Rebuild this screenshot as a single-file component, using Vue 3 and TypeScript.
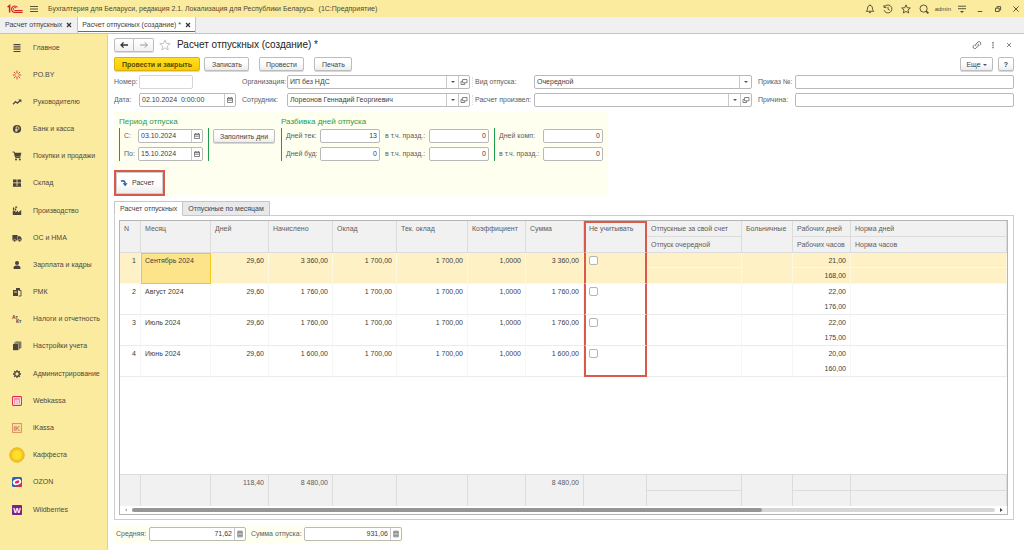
<script setup lang="ts">
import { ref } from 'vue'

interface Section { icon: string; label: string }
interface Row {
  n: number; month: string; days: string; accrued: string; salary: string; current: string
  factor: string; sum: string; skip: boolean; workDays: string; workHours: string
}

const sections: Section[] = [
  { icon: 'list', label: 'Главное' },
  { icon: 'spark', label: 'PO.BY' },
  { icon: 'trend', label: 'Руководителю' },
  { icon: 'coin', label: 'Банк и касса' },
  { icon: 'cart', label: 'Покупки и продажи' },
  { icon: 'store', label: 'Склад' },
  { icon: 'factory', label: 'Производство' },
  { icon: 'truck', label: 'ОС и НМА' },
  { icon: 'person', label: 'Зарплата и кадры' },
  { icon: 'pos', label: 'РМК' },
  { icon: 'tax', label: 'Налоги и отчетность' },
  { icon: 'books', label: 'Настройки учета' },
  { icon: 'gear', label: 'Администрирование' },
  { icon: 'webkassa', label: 'Webkassa' },
  { icon: 'ikassa', label: 'iKassa' },
  { icon: 'gold', label: 'Каффеста' },
  { icon: 'ozon', label: 'OZON' },
  { icon: 'wb', label: 'Wildberries' },
]

const rows = ref<Row[]>([
  { n: 1, month: 'Сентябрь 2024', days: '29,60', accrued: '3 360,00', salary: '1 700,00', current: '1 700,00', factor: '1,0000', sum: '3 360,00', skip: false, workDays: '21,00', workHours: '168,00' },
  { n: 2, month: 'Август 2024', days: '29,60', accrued: '1 760,00', salary: '1 700,00', current: '1 700,00', factor: '1,0000', sum: '1 760,00', skip: false, workDays: '22,00', workHours: '176,00' },
  { n: 3, month: 'Июль 2024', days: '29,60', accrued: '1 760,00', salary: '1 700,00', current: '1 700,00', factor: '1,0000', sum: '1 760,00', skip: false, workDays: '22,00', workHours: '175,00' },
  { n: 4, month: 'Июнь 2024', days: '29,60', accrued: '1 600,00', salary: '1 700,00', current: '1 700,00', factor: '1,0000', sum: '1 600,00', skip: false, workDays: '20,00', workHours: '160,00' },
])
const selected = ref(1)
</script>

<template>
  <div class="app">
    <header class="titlebar">
      <svg class="logo" viewBox="0 0 16 10" aria-label="1С">
        <path d="M0.6 3.2 2.6 1.6V8.6" fill="none" stroke="#d8232a" stroke-width="1.5" />
        <path d="M10.4 3.4A3.2 3.2 0 1 0 7.6 8.4H15.6" fill="none" stroke="#d8232a" stroke-width="1.1" />
        <path d="M9 4A1.5 1.5 0 1 0 7.6 6.5H15.6" fill="none" stroke="#d8232a" stroke-width="1" />
      </svg>
      <button class="plain menu" aria-label="Меню">
        <svg viewBox="0 0 8 8"><path d="M0 1.5H8M0 4H8M0 6.5H8" stroke="#5c5435" stroke-width="1" /></svg>
      </button>
      <span class="apptitle">Бухгалтерия для Беларуси, редакция 2.1. Локализация для Республики Беларусь</span>
      <span class="platform">(1С:Предприятие)</span>
      <div class="tools">
        <button class="plain" aria-label="Уведомления"><svg viewBox="0 0 10 10"><path d="M1.2 7.3C2.4 6.4 2.4 5.4 2.6 4 2.8 2.3 3.7 1.4 5 1.4S7.2 2.3 7.4 4C7.6 5.4 7.6 6.4 8.8 7.3ZM4 8.6H6M5 .5V1.4" /></svg></button>
        <button class="plain" aria-label="История"><svg viewBox="0 0 10 10"><path d="M1.3 3.2A4 4 0 1 1 1.1 6.2M1 1V3.4H3.4M5 2.8V5.2L6.7 6.3" /></svg></button>
        <button class="plain" aria-label="Избранное"><svg viewBox="0 0 10 10"><path d="M5 .9 6.2 3.7 9.3 4 7 6 7.7 9 5 7.4 2.3 9 3 6 .7 4 3.8 3.7Z" /></svg></button>
        <button class="plain" aria-label="Поиск"><svg viewBox="0 0 10 10"><circle cx="4.6" cy="4.6" r="3.6" /><path d="M7 7 9.4 9.4" stroke-width="1.6" /></svg></button>
        <a class="user" href="#">admin</a>
        <button class="plain" aria-label="Настройка"><svg viewBox="0 0 10 10"><path d="M1 2.2H9M1 4.7H9" /><path d="M3 7H7L5 9Z" fill="#4d4731" stroke="none" /></svg></button>
        <button class="plain" aria-label="Свернуть"><svg viewBox="0 0 10 10"><path d="M2.7 7.5H7.3" /></svg></button>
        <button class="plain" aria-label="Восстановить"><svg viewBox="0 0 10 10"><path d="M2.5 4.2H6.2V7.5H2.5ZM4 4V2.6H7.6V6H6.4" /></svg></button>
        <button class="plain" aria-label="Закрыть"><svg viewBox="0 0 10 10"><path d="M2.4 2.4 7.6 7.6M7.6 2.4 2.4 7.6" /></svg></button>
      </div>
    </header>

    <nav class="windows" aria-label="Открытые окна">
      <div class="wtab"><a href="#">Расчет отпускных</a><button class="plain x" aria-label="Закрыть вкладку"><svg viewBox="0 0 6 6"><path d="M1 1 5 5M5 1 1 5" stroke="#333" stroke-width="1.2" /></svg></button></div>
      <div class="wtab on"><a href="#">Расчет отпускных (создание) *</a><button class="plain x" aria-label="Закрыть вкладку"><svg viewBox="0 0 6 6"><path d="M1 1 5 5M5 1 1 5" stroke="#333" stroke-width="1.2" /></svg></button></div>
    </nav>

    <div class="body">
      <nav class="side" aria-label="Разделы">
        <a v-for="s in sections" :key="s.label" href="#">
          <span class="ico">
            <svg v-if="s.icon === 'list'" viewBox="0 0 10 10"><path d="M1.5 1.6H8.5M1.5 3.9H8.5M1.5 6.2H8.5M1.5 8.5H8.5" stroke="#4b4340" stroke-width="1.2" /></svg>
            <svg v-else-if="s.icon === 'spark'" viewBox="0 0 10 10"><path d="M5 .6V3.6M5 6.4V9.4M.8 5H3.6M6.4 5H9.2M1.9 1.9 3.6 3.6M6.4 6.4 8.1 8.1M8.1 1.9 6.4 3.6M3.6 6.4 1.9 8.1" stroke="#d9433f" stroke-width="1" /></svg>
            <svg v-else-if="s.icon === 'trend'" viewBox="0 0 10 10"><path d="M1 7.2 3.6 4.6 5.4 6.2 8.4 3.2" fill="none" stroke="#4b4340" stroke-width="1.3" /><path d="M6.2 2.4H9.4V5.6Z" fill="#4b4340" /></svg>
            <svg v-else-if="s.icon === 'coin'" viewBox="0 0 10 10"><circle cx="5" cy="5" r="4.1" fill="#4b4340" /><path d="M4.2 8V2.8H5.6A1.3 1.3 0 0 1 5.6 5.5H3.2M3.2 6.7H5.8" fill="none" stroke="#fbeb9e" stroke-width=".8" /></svg>
            <svg v-else-if="s.icon === 'cart'" viewBox="0 0 10 10"><path d="M.6 1H2.2L3.6 6.6H8.4" fill="none" stroke="#4b4340" stroke-width="1" /><path d="M2.2 1.8H9.4L8.4 5.8H3.3Z" fill="#4b4340" /><circle cx="4" cy="8.4" r="1" fill="#4b4340" /><circle cx="7.8" cy="8.4" r="1" fill="#4b4340" /></svg>
            <svg v-else-if="s.icon === 'store'" viewBox="0 0 10 10"><path d="M1 1.4H4.6V4.4H1ZM5.4 1.4H9V4.4H5.4ZM1 5.2H4.6V8H1ZM5.4 5.2H9V8H5.4ZM.8 8.2H9.2V9H.8Z" fill="#4b4340" /></svg>
            <svg v-else-if="s.icon === 'factory'" viewBox="0 0 10 10"><path d="M.8 9V5H3.4V6.4L6 4.6V6.4L9.2 4V9Z" fill="#4b4340" /><path d="M1.6 4.4V1.6M3.6 4.4V2.4M3.2 1.2H5.2" stroke="#4b4340" stroke-width="1.3" /></svg>
            <svg v-else-if="s.icon === 'truck'" viewBox="0 0 10 10"><path d="M.4 2H5.6V7.4H.4ZM6 3.2H8.2L9.6 5.2V7.4H6Z" fill="#4b4340" /><circle cx="2.6" cy="7.6" r="1.3" fill="#4b4340" stroke="#fbeb9e" stroke-width=".5" /><circle cx="7.6" cy="7.6" r="1.3" fill="#4b4340" stroke="#fbeb9e" stroke-width=".5" /></svg>
            <svg v-else-if="s.icon === 'person'" viewBox="0 0 10 10"><circle cx="5" cy="3" r="2" fill="#4b4340" /><path d="M1.6 9V7.6C1.6 6 3.6 5.6 5 5.6S8.4 6 8.4 7.6V9Z" fill="#4b4340" /></svg>
            <svg v-else-if="s.icon === 'pos'" viewBox="0 0 10 10"><path d="M1 3H6V9H1ZM4 1H8V3H4Z" fill="#4b4340" /><path d="M6.6 3.4H9V9H6.6" fill="none" stroke="#4b4340" stroke-width=".9" /><path d="M2 5H5" stroke="#fbeb9e" stroke-width=".9" /></svg>
            <svg v-else-if="s.icon === 'tax'" viewBox="0 0 10 10"><text x="0" y="4.8" font-size="5" font-weight="bold" fill="#4b4340">Ат</text><text x="4" y="9.4" font-size="5" font-weight="bold" fill="#4b4340">Кт</text></svg>
            <svg v-else-if="s.icon === 'books'" viewBox="0 0 10 10"><path d="M1 3H6.4V9.2H1Z" fill="#4b4340" /><path d="M2 2.1H7.4V8.2M3.4 1H8.8V7.2" fill="none" stroke="#4b4340" stroke-width=".9" /></svg>
            <svg v-else-if="s.icon === 'gear'" viewBox="0 0 10 10"><circle cx="5" cy="5" r="2.3" fill="none" stroke="#4b4340" stroke-width="1.3" /><path d="M5 1V2.4M5 7.6V9M1 5H2.4M7.6 5H9M2.2 2.2 3.2 3.2M6.8 6.8 7.8 7.8M7.8 2.2 6.8 3.2M3.2 6.8 2.2 7.8" stroke="#4b4340" stroke-width="1.3" /></svg>
            <svg v-else-if="s.icon === 'webkassa'" viewBox="0 0 10 10"><rect x=".6" y=".6" width="8.8" height="8.8" rx=".8" fill="#fff" stroke="#e5264a" stroke-width="1.1" /><path d="M2 3H8M2 5H3.4M4.4 5H5.6M6.6 5H8M2 7H3.4M4.4 7H5.6M6.6 7H8" stroke="#e5264a" stroke-width="1.1" /></svg>
            <svg v-else-if="s.icon === 'ikassa'" viewBox="0 0 10 10"><rect x=".5" y=".5" width="9" height="9" fill="#f8df95" stroke="#d9815a" stroke-width=".8" /><text x="1.4" y="7.8" font-size="7.5" fill="#c9603f">iK</text></svg>
            <svg v-else-if="s.icon === 'gold'" class="big" viewBox="0 0 16 16"><circle cx="8" cy="8" r="7.2" fill="#fbcf1d" stroke="#e0a010" stroke-width=".8" /><circle cx="8" cy="8" r="5.2" fill="#ffdf2e" stroke="#eeb414" stroke-width=".7" /></svg>
            <svg v-else-if="s.icon === 'ozon'" viewBox="0 0 10 10"><rect width="10" height="10" rx="1.6" fill="#2a62b8" /><path d="M3.5 10H8.4A1.6 1.6 0 0 0 10 8.4V6.4Z" fill="#e8274b" /><ellipse cx="5" cy="5" rx="4.3" ry="3" fill="#fff" transform="rotate(-18 5 5)" /><ellipse cx="5.1" cy="5" rx="2.4" ry="1.4" fill="#e8274b" transform="rotate(-18 5 5)" /></svg>
            <svg v-else viewBox="0 0 10 10"><rect width="10" height="10" rx=".8" fill="#7a2389" /><text x="5" y="7.8" text-anchor="middle" font-size="8" font-weight="bold" fill="#fff">W</text></svg>
          </span>
          <span>{{ s.label }}</span>
        </a>
      </nav>

      <main class="main">
        <div class="head">
          <div class="history">
            <button aria-label="Назад"><svg viewBox="0 0 10 8"><path d="M9 4H2M4.6 1.4 2 4 4.6 6.6" stroke="#333" stroke-width="1.3" fill="none" /></svg></button>
            <button aria-label="Вперед"><svg viewBox="0 0 10 8"><path d="M1 4H8.4M5.8 1.4 8.4 4 5.8 6.6" stroke="#999" stroke-width="1" fill="none" /></svg></button>
          </div>
          <button class="plain star" aria-label="В избранное"><svg viewBox="0 0 12 12"><path d="M6 .9 7.4 4.4 11.2 4.7 8.3 7.1 9.2 10.9 6 8.8 2.8 10.9 3.7 7.1 .8 4.7 4.6 4.4Z" fill="none" stroke="#b5b5b5" stroke-width=".8" /></svg></button>
          <h1>Расчет отпускных (создание) *</h1>
          <div class="headtools">
            <button class="plain" aria-label="Ссылка"><svg viewBox="0 0 10 10"><path d="M4 6.4A2 2 0 0 1 4 4L6.2 1.8A1.8 1.8 0 0 1 8.6 4.2L7.4 5.4M6 3.8A2 2 0 0 1 6 6.2L3.8 8.4A1.8 1.8 0 0 1 1.4 5.8L2.6 4.6" fill="none" stroke="#666" stroke-width=".9" /></svg></button>
            <button class="plain" aria-label="Еще действия"><svg viewBox="0 0 10 10"><path d="M4.3 2H5.7V3.4H4.3ZM4.3 4.4H5.7V5.8H4.3ZM4.3 6.8H5.7V8.2H4.3Z" fill="#666" /></svg></button>
            <button class="plain" aria-label="Закрыть форму"><svg viewBox="0 0 10 10"><path d="M3 3 7 7M7 3 3 7" stroke="#777" stroke-width=".9" /></svg></button>
          </div>
        </div>

        <div class="commands">
          <button class="btn primary">Провести и закрыть</button>
          <button class="btn save">Записать</button>
          <button class="btn post">Провести</button>
          <button class="btn print">Печать</button>
          <button class="btn more">Еще <i class="caret"></i></button>
          <button class="btn help">?</button>
        </div>

        <div class="fields">
          <label for="num">Номер:</label>
          <div class="box short"><input id="num" type="text"></div>
          <label for="org">Организация:</label>
          <div class="box">
            <div class="pick"><select id="org"><option>ИП без НДС</option></select><span><i class="caret"></i></span></div>
            <button class="cell" aria-label="Открыть организацию"><svg viewBox="0 0 8 8"><path d="M2.6 1.5H7V4.8H2.6ZM4.6 5V6.5H1V3.4H2.4" /></svg></button>
          </div>
          <label for="kind" class="sep">Вид отпуска:</label>
          <div class="box"><div class="pick"><select id="kind"><option>Очередной</option></select><span><i class="caret"></i></span></div></div>
          <label for="order">Приказ №:</label>
          <div class="box"><input id="order" type="text"></div>

          <label for="date">Дата:</label>
          <div class="box">
            <input id="date" type="text" value="02.10.2024  0:00:00">
            <button class="cell" aria-label="Выбрать дату"><svg viewBox="0 0 8 8"><path d="M1.5 2H6.5V6.5H1.5ZM1.5 2.6H6.5M2.6 1V2M5.4 1V2M2 4.2H6" /></svg></button>
          </div>
          <label for="emp">Сотрудник:</label>
          <div class="box">
            <div class="pick"><select id="emp"><option>Лореонов Геннадий Георгиевич</option></select><span><i class="caret"></i></span></div>
            <button class="cell" aria-label="Открыть сотрудника"><svg viewBox="0 0 8 8"><path d="M2.6 1.5H7V4.8H2.6ZM4.6 5V6.5H1V3.4H2.4" /></svg></button>
          </div>
          <label for="by" class="sep">Расчет произвел:</label>
          <div class="box">
            <div class="pick"><select id="by"><option></option></select><span><i class="caret"></i></span></div>
            <button class="cell" aria-label="Открыть исполнителя"><svg viewBox="0 0 8 8"><path d="M2.6 1.5H7V4.8H2.6ZM4.6 5V6.5H1V3.4H2.4" /></svg></button>
          </div>
          <label for="why">Причина:</label>
          <div class="box"><input id="why" type="text"></div>
        </div>

        <section class="vacation">
          <div class="groups">
            <div class="group period">
              <h2>Период отпуска</h2>
              <div class="cols">
                <div class="bar dates">
                  <label for="from">С:</label>
                  <div class="box"><input id="from" type="text" value="03.10.2024"><button class="cell" aria-label="Выбрать начало"><svg viewBox="0 0 8 8"><path d="M1.5 2H6.5V6.5H1.5ZM1.5 2.6H6.5M2.6 1V2M5.4 1V2M2 4.2H6" /></svg></button></div>
                  <label for="to">По:</label>
                  <div class="box"><input id="to" type="text" value="15.10.2024"><button class="cell" aria-label="Выбрать конец"><svg viewBox="0 0 8 8"><path d="M1.5 2H6.5V6.5H1.5ZM1.5 2.6H6.5M2.6 1V2M5.4 1V2M2 4.2H6" /></svg></button></div>
                </div>
                <div class="fill"><button class="btn">Заполнить дни</button></div>
              </div>
            </div>
            <div class="group">
              <h2>Разбивка дней отпуска</h2>
              <div class="cols">
                <div class="bar split">
                  <label for="cur">Дней тек:</label>
                  <div class="box num"><input id="cur" type="text" value="13"></div>
                  <label for="curh">в т.ч. празд.:</label>
                  <div class="box num"><input id="curh" type="text" value="0"></div>
                  <label for="fut">Дней буд:</label>
                  <div class="box num"><input id="fut" type="text" value="0"></div>
                  <label for="futh">в т.ч. празд.:</label>
                  <div class="box num"><input id="futh" type="text" value="0"></div>
                </div>
                <div class="bar comp">
                  <label for="cmp">Дней комп:</label>
                  <div class="box num"><input id="cmp" type="text" value="0"></div>
                  <label for="cmph">в т.ч. празд.:</label>
                  <div class="box num"><input id="cmph" type="text" value="0"></div>
                </div>
              </div>
            </div>
          </div>
          <div class="marked">
            <button class="calc"><svg viewBox="0 0 8 8"><path d="M1 2.2C3.4 1 5 2 5 4.4" fill="none" stroke="#2f5f93" stroke-width="1.6" /><path d="M2.6 4.2H7.6L5.2 7.2Z" fill="#2f5f93" /></svg>Расчет</button>
          </div>
        </section>

        <div class="tabs" role="tablist">
          <button role="tab" aria-selected="true" class="on">Расчет отпускных</button>
          <button role="tab" aria-selected="false">Отпускные по месяцам</button>
        </div>

        <div class="panel">
          <div class="grid">
            <table>
              <colgroup>
                <col class="c21"><col class="c70"><col class="c58"><col class="c64"><col class="c64"><col class="c71"><col class="c58"><col class="c58"><col class="c63"><col class="c95"><col class="c51"><col class="c58"><col>
              </colgroup>
              <thead>
                <tr>
                  <th rowspan="2">N</th>
                  <th rowspan="2">Месяц</th>
                  <th rowspan="2">Дней</th>
                  <th rowspan="2">Начислено</th>
                  <th rowspan="2">Оклад</th>
                  <th rowspan="2">Тек. оклад</th>
                  <th rowspan="2">Коэффициент</th>
                  <th rowspan="2">Сумма</th>
                  <th rowspan="2" class="red first">Не учитывать</th>
                  <th>Отпускные за свой счет</th>
                  <th rowspan="2">Больничные</th>
                  <th>Рабочих дней</th>
                  <th>Норма дней</th>
                </tr>
                <tr><th>Отпуск очередной</th><th>Рабочих часов</th><th>Норма часов</th></tr>
              </thead>
              <tbody>
                <template v-for="(r, i) in rows" :key="r.n">
                  <tr :class="{ sel: selected === r.n }" @click="selected = r.n">
                    <td rowspan="2" class="r">{{ r.n }}</td>
                    <td rowspan="2" class="month">{{ r.month }}</td>
                    <td rowspan="2" class="r">{{ r.days }}</td>
                    <td rowspan="2" class="r">{{ r.accrued }}</td>
                    <td rowspan="2" class="r">{{ r.salary }}</td>
                    <td rowspan="2" class="r">{{ r.current }}</td>
                    <td rowspan="2" class="r">{{ r.factor }}</td>
                    <td rowspan="2" class="r">{{ r.sum }}</td>
                    <td rowspan="2" class="red" :class="{ last: i === rows.length - 1 }"><input v-model="r.skip" type="checkbox" :aria-label="'Не учитывать ' + r.month"></td>
                    <td class="up"></td>
                    <td rowspan="2"></td>
                    <td class="r up">{{ r.workDays }}</td>
                    <td class="up"></td>
                  </tr>
                  <tr class="low" :class="{ sel: selected === r.n }" @click="selected = r.n"><td></td><td class="r">{{ r.workHours }}</td><td></td></tr>
                </template>
                <tr class="space"><td colspan="13"></td></tr>
              </tbody>
              <tfoot>
                <tr>
                  <td rowspan="2"></td><td rowspan="2"></td>
                  <td rowspan="2" class="r">118,40</td>
                  <td rowspan="2" class="r">8 480,00</td>
                  <td rowspan="2"></td><td rowspan="2"></td><td rowspan="2"></td>
                  <td rowspan="2" class="r">8 480,00</td>
                  <td rowspan="2"></td><td></td><td rowspan="2"></td><td></td><td></td>
                </tr>
                <tr><td></td><td></td><td></td></tr>
              </tfoot>
            </table>
            <div class="scroll">
              <button class="plain" aria-label="Влево"><svg viewBox="0 0 6 6"><path d="M4 1.4V4.6L2 3Z" fill="#aaa" /></svg></button>
              <div class="track"><div class="thumb"></div></div>
              <button class="plain" aria-label="Вправо"><svg viewBox="0 0 6 6"><path d="M2 1V5L4.6 3Z" fill="#444" /></svg></button>
            </div>
          </div>
        </div>

        <div class="totals">
          <label for="avg">Средняя:</label>
          <div class="box num"><input id="avg" type="text" value="71,62"><button class="cell" aria-label="Калькулятор средней"><svg viewBox="0 0 8 8"><path d="M1.8 1.2H6.2V6.8H1.8ZM2 2.4H6M2.2 4H5.8M2.2 5.4H5.8" /></svg></button></div>
          <label for="total">Сумма отпуска:</label>
          <div class="box num"><input id="total" type="text" value="931,06"><button class="cell" aria-label="Калькулятор суммы"><svg viewBox="0 0 8 8"><path d="M1.8 1.2H6.2V6.8H1.8ZM2 2.4H6M2.2 4H5.8M2.2 5.4H5.8" /></svg></button></div>
        </div>
      </main>
    </div>
  </div>
</template>

<style>
body { margin: 0; background: #fff; }
</style>

<style scoped>
.app, .app * { box-sizing: border-box; }
.app {
  min-height: 100vh; display: flex; flex-direction: column;
  font: 7px/10px "Liberation Sans", Arial, sans-serif; color: #404040; background: #fff;
}
button, input, select { font: inherit; color: inherit; margin: 0; }
button { cursor: pointer; white-space: nowrap; }
svg { display: block; flex: none; }
a { color: inherit; text-decoration: none; }
label { color: #5c5c5c; white-space: nowrap; }
.plain { border: 0; padding: 0; background: none; display: grid; place-items: center; }

.titlebar { height: 17px; background: #fbeb9e; display: flex; align-items: center; padding: 0 3px 0 7px; }
.logo { width: 16px; height: 10px; }
.menu { margin-left: 7px; }
.menu svg { width: 8px; height: 8px; }
.apptitle { margin-left: 10px; color: #4f4833; white-space: nowrap; }
.platform { margin-left: 5px; color: #4f4833; white-space: nowrap; }
.tools { margin-left: auto; display: flex; align-items: center; gap: 8px; }
.tools svg { width: 10px; height: 10px; fill: none; stroke: #4d4731; stroke-width: .9; }
.user { font-size: 6px; color: #4f4833; margin: 0 -2px; }

.windows { height: 17px; background: #f0f0f0; border-bottom: 1px solid #c4c4c4; display: flex; }
.wtab { display: flex; align-items: center; gap: 4px; padding: 0 5px; border-right: 1px solid #c4c4c4; white-space: nowrap; }
.wtab.on { background: #fff; padding: 0 4px; box-shadow: inset 0 -1px #fff, inset 0 -2px #1c9a4b; }
.x svg { width: 6px; height: 6px; }

.body { flex: 1; display: flex; }
.side { width: 108px; flex: none; background: #fbeb9e; border-right: 1px solid #e3d28a; display: flex; flex-direction: column; padding-bottom: 27px; }
.side a { flex: 1; min-height: 24px; display: flex; align-items: center; gap: 8px; padding-left: 9px; color: #4f4740; white-space: nowrap; }
.ico { width: 16px; height: 16px; display: grid; place-items: center; }
.ico svg { width: 10px; height: 10px; }
.ico .big { width: 16px; height: 16px; }

.main { flex: 1; min-width: 0; display: flex; flex-direction: column; padding: 4px 10px 7px 6px; }
.head { display: flex; align-items: center; height: 14px; }
.history { display: flex; height: 14px; }
.history button { width: 20px; padding: 0; border: 1px solid #bdbdbd; border-radius: 2px 0 0 2px; background: linear-gradient(#fff, #f1f1f1); display: grid; place-items: center; box-shadow: 0 1px #ddd; }
.history button + button { border-left: 0; border-radius: 0 2px 2px 0; }
.history svg { width: 10px; height: 8px; }
.star { margin-left: 5px; }
.star svg { width: 12px; height: 12px; }
h1 { margin: 0 0 0 6px; font-size: 10px; line-height: 14px; font-weight: 400; color: #222; white-space: nowrap; }
.headtools { margin-left: auto; display: flex; gap: 6px; }
.headtools svg { width: 10px; height: 10px; }

.btn { height: 14px; padding: 0 7px; line-height: 11px; border: 1px solid #bdbdbd; border-radius: 2px; background: linear-gradient(#fff 40%, #ededed); color: #444; box-shadow: 0 1px #d8d8d8; }
.commands { display: flex; margin: 5px 0 4px; }
.primary { width: 86px; padding: 0; background: linear-gradient(#ffe01f, #fbcb02); border-color: #d9b311; font-weight: 700; color: #5b4a00; }
.save { margin-left: 4px; width: 45px; }
.post { margin-left: 10px; width: 45px; padding: 0; }
.print { margin-left: 10px; width: 38px; }
.more { margin-left: auto; width: 33px; padding: 0; }
.help { margin-left: 5px; width: 16px; padding: 0; font-weight: 700; }
.caret { display: inline-block; border: 2px solid transparent; border-top-color: #555; border-bottom: 0; vertical-align: middle; }

.box { display: flex; min-width: 0; height: 14px; border: 1px solid #b9b9b9; border-radius: 2px; background: #fff; overflow: hidden; }
.box input { flex: 1; min-width: 0; width: 100%; border: 0; padding: 0 2px; background: none; outline: none; white-space: pre; }
.num input { text-align: right; }
.short { width: 54px; border-color: #d6d6d6; }
.pick { flex: 1; min-width: 0; display: grid; }
.pick select { grid-area: 1 / 1; appearance: none; border: 0; padding: 0 14px 0 2px; background: none; outline: none; }
.pick span { grid-area: 1 / 1; justify-self: end; width: 12px; border-left: 1px solid #c9c9c9; display: grid; place-items: center; pointer-events: none; }
.cell { width: 11px; flex: none; border: 0; border-left: 1px solid #c9c9c9; padding: 0; background: none; display: grid; place-items: center; }
.cell svg { width: 8px; height: 8px; fill: none; stroke: #666; stroke-width: .8; }

.fields { display: grid; grid-template-columns: 25px 97px 51px 183fr 64px 218fr 43px 219fr; gap: 4px 0; align-items: center; }
.fields label { padding-left: 6px; }
.fields label:nth-child(8n + 1) { padding-left: 0; }
.fields .sep { margin-left: 2px; padding-left: 2px; border-left: 1px dotted #ddd; }

.vacation { align-self: flex-start; margin-top: 5px; padding: 4px 5px 0; background: #fffff0; }
.groups { display: flex; gap: 5px; }
h2 { margin: 0; font-size: 8px; line-height: 12px; font-weight: 400; color: #1f9a4f; white-space: nowrap; }
.cols { display: flex; gap: 5px; }
.bar, .fill { border-left: 1px solid #1f9a4f; padding: 1px 0 0 4px; display: grid; gap: 4px 0; align-items: center; align-content: start; }
.dates { grid-template-columns: 14px 65px; }
.fill { width: 68px; }
.fill .btn { width: 62px; padding: 0; }
.split { grid-template-columns: 34px 60px 49px 60px; }
.split label:nth-of-type(even) { padding-left: 5px; }
.comp { grid-template-columns: 44px 60px; }
.marked { width: 51px; height: 26px; margin: 9px 0 0 -5px; border: 2px solid #d9594a; background: #fff; display: flex; }
.calc { flex: 1; display: flex; align-items: center; gap: 4px; padding: 0 3px; border: 1px solid #ccc; background: linear-gradient(#fff 50%, #eee); }
.calc svg { width: 8px; height: 8px; }

.tabs { display: flex; margin-top: 5px; position: relative; z-index: 1; margin-bottom: -1px; }
.tabs button { height: 15px; padding: 0 5px; border: 1px solid #c6c6c6; border-left: 0; background: #e9e9e9; color: #444; }
.tabs .on { border-left: 1px solid #c6c6c6; background: #fff; border-bottom-color: #fff; }
.panel { flex: 1; display: flex; border: 1px solid #cdcdcd; padding: 4px 5px 4px 4px; }
.grid { flex: 1; min-width: 0; display: flex; flex-direction: column; border: 1px solid #b5b5b5; }
table { flex: 1; width: 100%; table-layout: fixed; border-collapse: separate; border-spacing: 0; }
.c21 { width: 21px; } .c51 { width: 51px; } .c58 { width: 58px; } .c63 { width: 63px; }
.c64 { width: 64px; } .c70 { width: 70px; } .c71 { width: 71px; } .c95 { width: 95px; }
th, td { padding: 3px 4px 1px; vertical-align: top; text-align: left; font-weight: 400; white-space: nowrap; line-height: 10px; overflow: hidden; }
th { height: 16px; background: #f1f1f1; color: #5c5c5c; border-right: 1px solid #dcdcdc; border-bottom: 1px solid #dcdcdc; }
tbody td { height: 15px; border-right: 1px solid #f6f6f6; border-bottom: 1px solid #ebebeb; }
tbody .up { border-bottom-color: transparent; }
tbody .low td { height: 16px; }
.r { text-align: right; }
.sel td { background: #fdf1c5; border-color: #fdf8e4; }
.sel .up { border-bottom-color: #fdf8e4; }
.sel .month { background: #fde48b; border: 1px solid #f2c81d; padding: 2px 4px 1px 3px; }
th.red, td.red { border-left: 2px solid #d9594a; border-right: 2px solid #d9594a; padding-left: 3px; }
th.first { border-top: 2px solid #d9594a; padding-top: 1px; }
td.last { border-bottom: 2px solid #d9594a; }
.red input { appearance: none; display: block; width: 9px; height: 9px; margin: 0; border: 1px solid #b5b5b5; border-radius: 2px; background: #fff; }
.red input:checked { background: #1f9a4f; }
.space, tbody .space td { height: 100%; border: 0; padding: 0; }
tfoot td { height: 16px; background: #f1f1f1; border-right: 1px solid #dcdcdc; border-top: 1px solid #dcdcdc; color: #5c5c5c; }
.scroll { height: 8px; display: flex; align-items: center; gap: 3px; padding: 0 3px; }
.scroll svg { width: 6px; height: 6px; }
.track { flex: 1; height: 4px; border-radius: 2px; background: #d6d6d4; }
.thumb { width: 73%; height: 4px; border-radius: 2px; background: #969696; }

.totals { align-self: flex-start; display: grid; grid-template-columns: 33px 97px 58px 98px; align-items: center; margin-top: 5px; padding: 2px 1px 2px 2px; background: #fffff0; }
.totals label:nth-of-type(2) { padding-left: 5px; }
</style>
